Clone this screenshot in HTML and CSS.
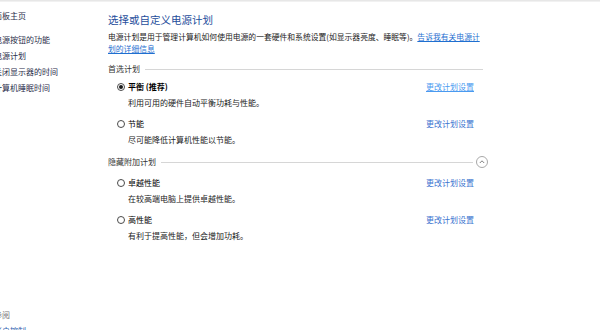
FILE: index.html
```html
<!DOCTYPE html>
<html lang="zh">

<head>
    <meta charset="UTF-8">
    <title>电源选项</title>
    <link rel="stylesheet" href="styles.css">
</head>

<body>
    <div class="topbar"></div>
    <div class="page">
        <nav class="side">
            <div class="home">控制面板主页</div>
            <ul class="tasks">
                <li>选择电源按钮的功能</li>
                <li>创建电源计划</li>
                <li>选择关闭显示器的时间</li>
                <li>更改计算机睡眠时间</li>
            </ul>
            <div class="see-also">
                <div class="see-title">另请参阅</div>
                <div class="see-link">用户帐户控制</div>
            </div>
        </nav>

        <main>
            <h2>选择或自定义电源计划</h2>
            <p class="intro">电源计划是用于管理计算机如何使用电源的一套硬件和系统设置(如显示器亮度、睡眠等)。<a href="#">告诉我有关电源计<br>划的详细信息</a></p>

            <div class="group">
                <span>首选计划</span>
                <div class="rule"></div>
            </div>

            <div class="plan">
                <div class="plan-main">
                    <div class="plan-name"><span class="radio checked"></span><b>平衡 (推荐)</b></div>
                    <div class="plan-desc">利用可用的硬件自动平衡功耗与性能。</div>
                </div>
                <a href="#" class="change hover">更改计划设置</a>
            </div>

            <div class="plan">
                <div class="plan-main">
                    <div class="plan-name"><span class="radio"></span>节能</div>
                    <div class="plan-desc">尽可能降低计算机性能以节能。</div>
                </div>
                <a href="#" class="change">更改计划设置</a>
            </div>

            <div class="group hidden-plans">
                <span>隐藏附加计划</span>
                <div class="rule"></div>
                <span class="toggle">
                    <svg width="12" height="12" viewBox="0 0 12 12">
                        <circle cx="6" cy="6" r="5.5" fill="none" stroke="#a8a8a8" stroke-width="1"/>
                        <path d="M3.8 7 L6 4.8 L8.2 7" fill="none" stroke="#808080" stroke-width="1"/>
                    </svg>
                </span>
            </div>

            <div class="plan">
                <div class="plan-main">
                    <div class="plan-name"><span class="radio"></span>卓越性能</div>
                    <div class="plan-desc">在较高端电脑上提供卓越性能。</div>
                </div>
                <a href="#" class="change">更改计划设置</a>
            </div>

            <div class="plan">
                <div class="plan-main">
                    <div class="plan-name"><span class="radio"></span>高性能</div>
                    <div class="plan-desc">有利于提高性能，但会增加功耗。</div>
                </div>
                <a href="#" class="change">更改计划设置</a>
            </div>
        </main>
    </div>
</body>

</html>
```

FILE: styles.css
```css
* {
    padding: 0;
    margin: 0;
    box-sizing: border-box;
}

body {
    width: 600px;
    height: 330px;
    overflow: hidden;
    background: white;
    color: #1a1a1a;
    font-family: "Noto Sans CJK SC", "Noto Sans", sans-serif;
    font-size: 8px;
    position: relative;
}

.topbar {
    height: 2px;
    background: linear-gradient(#e2e2e2, #f6f6f6);
}

.page {
    display: grid;
    grid-template-columns: 108px 380px;
}

/* 左边栏，文字被窗口左边截掉 */
.side {
    margin-left: -22px;
    white-space: nowrap;
    line-height: 16px;
    color: #2a2d4a;
}

.home {
    margin-top: 6px;
}

.tasks {
    list-style: none;
    margin-top: 8px;
}

.see-also {
    margin-top: 211px;
}

.see-title {
    color: #777;
}

.see-link {
    color: #2f5fb0;
}

/* 右边主要内容 */
main {
    padding-top: 11px;
}

main>h2 {
    font-size: 10.5px;
    font-weight: normal;
    line-height: 14px;
    color: #1e4d9b;
}

.intro {
    margin-top: 4px;
    line-height: 12px;
    font-size: 7.8px;
    white-space: nowrap;
    color: #1a1a1a;
}

.intro>a {
    color: #1f6fd0;
}

.group {
    display: flex;
    align-items: center;
    margin-top: 6px;
    line-height: 16px;
    color: #333;
}

.rule {
    flex: 1;
    height: 1px;
    background: #d6d6d6;
    margin: 0 5px 0 5px;
}

.hidden-plans {
    margin-top: 6px;
}

.hidden-plans .rule {
    margin-right: 3px;
}

.toggle {
    display: flex;
}

.plan {
    display: flex;
    margin-top: 2px;
    line-height: 16px;
}

.plan+.plan {
    margin-top: 5px;
}

.hidden-plans+.plan {
    margin-top: 5px;
}

.plan-main {
    flex: 1;
}

.plan-name {
    display: flex;
    align-items: center;
    color: #000;
}

.plan-name>b {
    font-weight: bold;
}

.radio {
    width: 8px;
    height: 8px;
    border: 1px solid #4a4a4a;
    border-radius: 50%;
    margin: 0 3px 0 9px;
    display: flex;
    align-items: center;
    justify-content: center;
}

.radio.checked::after {
    content: "";
    width: 4px;
    height: 4px;
    border-radius: 50%;
    background: #1a1a1a;
}

.plan-desc {
    padding-left: 20px;
    color: #222;
}

.change {
    width: 62px;
    color: #3a73cf;
    text-decoration: none;
}

.change.hover {
    color: #4a9af0;
    text-decoration: underline;
}
```
